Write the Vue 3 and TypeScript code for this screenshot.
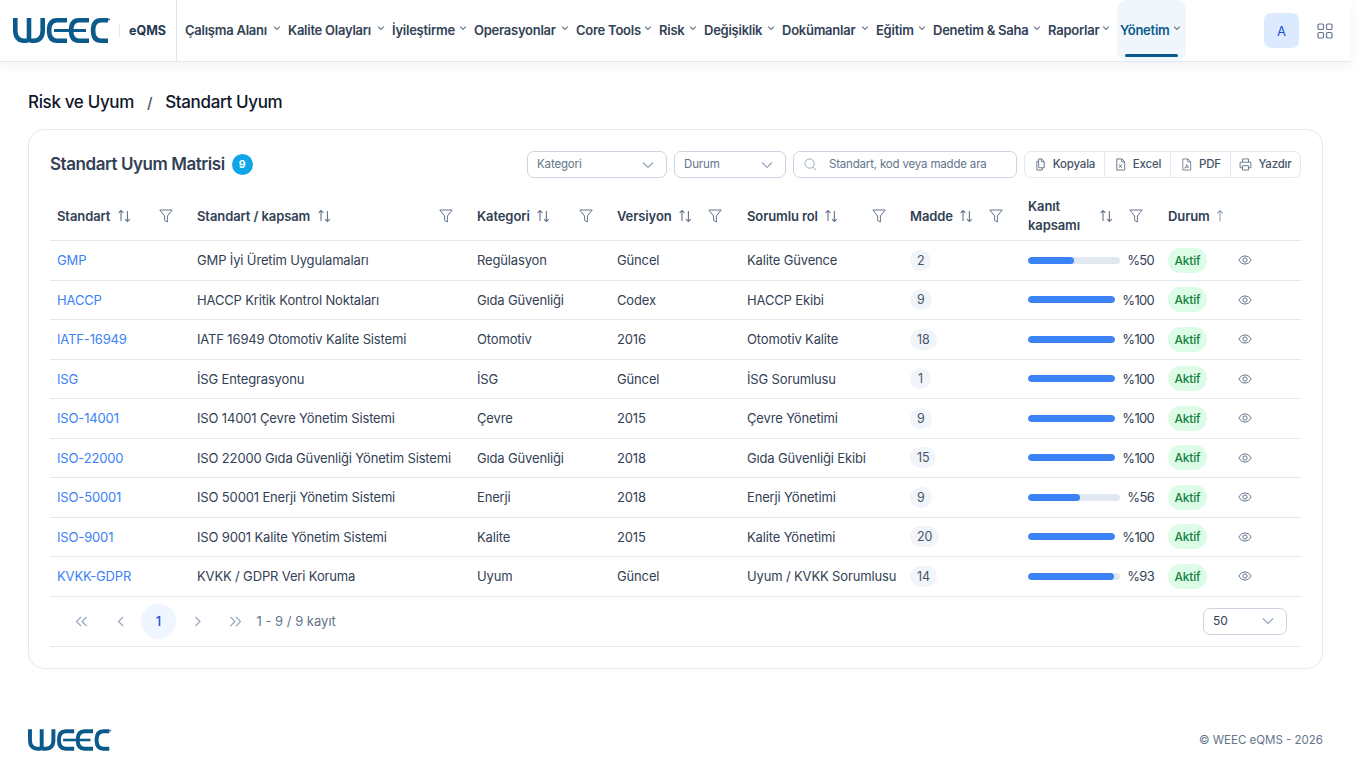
<script setup lang="ts">
interface Row {
  code: string
  name: string
  category: string
  version: string
  owner: string
  items: number
  coverage: number
}

const menu = [
  { label: 'Çalışma Alanı', width: 103 },
  { label: 'Kalite Olayları', width: 104 },
  { label: 'İyileştirme', width: 82 },
  { label: 'Operasyonlar', width: 102 },
  { label: 'Core Tools', width: 83 },
  { label: 'Risk', width: 45 },
  { label: 'Değişiklik', width: 78 },
  { label: 'Dokümanlar', width: 94 },
  { label: 'Eğitim', width: 57 },
  { label: 'Denetim & Saha', width: 115 },
  { label: 'Raporlar', width: 69 },
  { label: 'Yönetim', width: 69 },
]

const columns = [
  { label: 'Standart', cls: 'c1' },
  { label: 'Standart / kapsam', cls: 'c2' },
  { label: 'Kategori', cls: 'c3' },
  { label: 'Versiyon', cls: 'c4' },
  { label: 'Sorumlu rol', cls: 'c5' },
  { label: 'Madde', cls: 'c6' },
  { label: 'Kanıt kapsamı', cls: 'c7' },
]

const rows: Row[] = [
  { code: 'GMP', name: 'GMP İyi Üretim Uygulamaları', category: 'Regülasyon', version: 'Güncel', owner: 'Kalite Güvence', items: 2, coverage: 50 },
  { code: 'HACCP', name: 'HACCP Kritik Kontrol Noktaları', category: 'Gıda Güvenliği', version: 'Codex', owner: 'HACCP Ekibi', items: 9, coverage: 100 },
  { code: 'IATF-16949', name: 'IATF 16949 Otomotiv Kalite Sistemi', category: 'Otomotiv', version: '2016', owner: 'Otomotiv Kalite', items: 18, coverage: 100 },
  { code: 'ISG', name: 'İSG Entegrasyonu', category: 'İSG', version: 'Güncel', owner: 'İSG Sorumlusu', items: 1, coverage: 100 },
  { code: 'ISO-14001', name: 'ISO 14001 Çevre Yönetim Sistemi', category: 'Çevre', version: '2015', owner: 'Çevre Yönetimi', items: 9, coverage: 100 },
  { code: 'ISO-22000', name: 'ISO 22000 Gıda Güvenliği Yönetim Sistemi', category: 'Gıda Güvenliği', version: '2018', owner: 'Gıda Güvenliği Ekibi', items: 15, coverage: 100 },
  { code: 'ISO-50001', name: 'ISO 50001 Enerji Yönetim Sistemi', category: 'Enerji', version: '2018', owner: 'Enerji Yönetimi', items: 9, coverage: 56 },
  { code: 'ISO-9001', name: 'ISO 9001 Kalite Yönetim Sistemi', category: 'Kalite', version: '2015', owner: 'Kalite Yönetimi', items: 20, coverage: 100 },
  { code: 'KVKK-GDPR', name: 'KVKK / GDPR Veri Koruma', category: 'Uyum', version: 'Güncel', owner: 'Uyum / KVKK Sorumlusu', items: 14, coverage: 93 },
]

const exportsList = [
  { label: 'Kopyala', icon: 'i-copy', cls: 'ex-copy' },
  { label: 'Excel', icon: 'i-excel', cls: 'ex-excel' },
  { label: 'PDF', icon: 'i-pdf', cls: 'ex-pdf' },
  { label: 'Yazdır', icon: 'i-print', cls: 'ex-print' },
]
</script>

<template>
  <svg class="sprite" aria-hidden="true">
    <defs>
      <symbol id="i-chev" viewBox="0 0 14 14"><path d="M2 4.500 7 9.500 12 4.500" fill="none" stroke="currentColor" stroke-width="1.100" vector-effect="non-scaling-stroke" /></symbol>
      <symbol id="i-filter" viewBox="0 0 14 14"><path d="M.8 1h12.400L8.400 7v6L5.600 11.400V7Z" fill="none" stroke="currentColor" stroke-width="1" stroke-linejoin="round" /></symbol>
      <symbol id="i-sort" viewBox="0 0 14 14"><path d="M4 12V1.500M1.600 3.900 4 1.500l2.400 2.400M10.400 2v10.500M8 10.100l2.400 2.400 2.400-2.400" fill="none" stroke="currentColor" stroke-width="1.100" /></symbol>
      <symbol id="i-up" viewBox="0 0 10 14"><path d="M5 12.500V1.500M2.200 4.300 5 1.500l2.800 2.800" fill="none" stroke="currentColor" stroke-width="1.100" /></symbol>
      <symbol id="i-eye" viewBox="0 0 14 14"><path d="M.9 7C2.200 4.500 4.400 3 7 3s4.800 1.500 6.100 4C11.800 9.500 9.600 11 7 11S2.200 9.500.9 7Z" fill="none" stroke="currentColor" stroke-width="1" /><circle cx="7" cy="7" r="2.100" fill="none" stroke="currentColor" stroke-width="1" /></symbol>
      <symbol id="i-copy" viewBox="0 0 14 14"><path d="M5 1h3.200L11 3.800V10.500H5ZM5 3.500H3V13H9V10.500M8 1v3h3" fill="none" stroke="currentColor" stroke-width="1" stroke-linejoin="round" /></symbol>
      <symbol id="i-excel" viewBox="0 0 14 14"><path d="M3 1h5.500L11.500 4V13H3ZM8.300 1v3.200h3.200M5.500 7l2.800 3.500M8.300 7l-2.800 3.500" fill="none" stroke="currentColor" stroke-width="1" stroke-linejoin="round" /></symbol>
      <symbol id="i-pdf" viewBox="0 0 14 14"><path d="M3 1h5.500L11.500 4V13H3ZM8.300 1v3.200h3.200M5 10.800c1.500-.8 2.300-2.400 2-4 .4 1.500 1.300 2.500 2.400 2.900-1.500-.1-3 .3-4.400 1.100Z" fill="none" stroke="currentColor" stroke-width=".9" stroke-linejoin="round" /></symbol>
      <symbol id="i-print" viewBox="0 0 14 14"><path d="M3.800 4.500V1h6.400v3.500M3.800 10.500H1.200v-6h11.600v6h-2.600M3.800 8.300h6.400V13H3.800Z" fill="none" stroke="currentColor" stroke-width="1" stroke-linejoin="round" /></symbol>
      <symbol id="i-search" viewBox="0 0 14 14"><circle cx="6" cy="6" r="5" fill="none" stroke="currentColor" stroke-width="1" /><path d="m9.700 9.700 3.500 3.500" stroke="currentColor" stroke-width="1" /></symbol>
      <symbol id="i-logo" viewBox="0 0 97 25">
        <g fill="none" stroke="#0b5a8c" stroke-width="4.600">
          <path d="M2.300 0V12.500C2.300 19.500 6 22.700 11 22.700H13.500C14.800 22.700 16 21.800 16 20.500V0M16 20.500C16 21.800 17.200 22.700 18.500 22.700H21C26 22.700 29.700 19.500 29.700 12.500V0" />
          <path d="M54 2.300H44C38.500 2.300 36.100 6.500 36.100 12.500S38.500 22.700 44 22.700H54" />
          <path d="M76 2.300H66C60.500 2.300 58.100 6.500 58.100 12.500S60.500 22.700 66 22.700H76" />
          <path d="M95 2.300H88C82.500 2.300 80.100 6.500 80.100 12.500S82.500 22.700 88 22.700H95" />
        </g>
        <path d="M41 12.500H73" stroke="#0b5a8c" stroke-width="3" fill="none" />
        <circle cx="96" cy="1.500" r="1" fill="#0b5a8c" />
      </symbol>
    </defs>
  </svg>

  <div class="shell">
    <header class="topbar">
      <div class="brand">
        <svg class="logo"><use href="#i-logo" /></svg>
        <span class="brand-sep"></span>
        <span class="brand-name">eQMS</span>
      </div>
      <nav class="menu">
        <a
          v-for="item in menu"
          :key="item.label"
          class="menu-item"
          :class="{ active: item.label === 'Yönetim' }"
          :style="{ width: item.width + 'px' }"
        >
          <span>{{ item.label }}</span>
          <svg class="menu-chev"><use href="#i-chev" /></svg>
        </a>
      </nav>
      <div class="top-actions">
        <span class="avatar">A</span>
        <svg class="apps" viewBox="0 0 16 16" fill="none" stroke="currentColor" stroke-width="1.200">
          <rect x="1" y="1" width="5.500" height="5.500" rx="1.300" />
          <rect x="9.500" y="1" width="5.500" height="5.500" rx="1.300" />
          <rect x="1" y="9.500" width="5.500" height="5.500" rx="1.300" />
          <rect x="9.500" y="9.500" width="5.500" height="5.500" rx="1.300" />
        </svg>
      </div>
    </header>

    <main class="page">
      <div class="crumbs">
        <span>Risk ve Uyum</span>
        <span class="crumb-sep">/</span>
        <span>Standart Uyum</span>
      </div>

      <section class="card">
        <div class="card-head">
          <h1 class="title">Standart Uyum Matrisi</h1>
          <span class="count">9</span>
          <div class="tools">
            <div class="select sel-cat">
              <span>Kategori</span>
              <svg><use href="#i-chev" /></svg>
            </div>
            <div class="select sel-status">
              <span>Durum</span>
              <svg><use href="#i-chev" /></svg>
            </div>
            <div class="search">
              <svg><use href="#i-search" /></svg>
              <span>Standart, kod veya madde ara</span>
            </div>
            <div class="exports">
              <button v-for="b in exportsList" :key="b.label" class="export" :class="b.cls" type="button">
                <svg><use :href="'#' + b.icon" /></svg>
                <span>{{ b.label }}</span>
              </button>
            </div>
          </div>
        </div>

        <div class="table">
          <div class="thead">
            <div v-for="col in columns" :key="col.label" class="th" :class="col.cls">
              <span class="th-label" :class="{ narrow: col.cls === 'c7' }">{{ col.label }}</span>
              <svg class="sort"><use href="#i-sort" /></svg>
              <svg class="filter"><use href="#i-filter" /></svg>
            </div>
            <div class="th c8">
              <span class="th-label">Durum</span>
              <svg class="sort-up"><use href="#i-up" /></svg>
            </div>
            <div class="th c9"></div>
          </div>

          <div v-for="row in rows" :key="row.code" class="tr">
            <div class="td c1"><a class="code">{{ row.code }}</a></div>
            <div class="td c2">{{ row.name }}</div>
            <div class="td c3">{{ row.category }}</div>
            <div class="td c4">{{ row.version }}</div>
            <div class="td c5">{{ row.owner }}</div>
            <div class="td c6"><span class="pill">{{ row.items }}</span></div>
            <div class="td c7">
              <div class="cover">
                <div class="bar"><div class="fill" :style="{ width: row.coverage + '%' }"></div></div>
                <span class="pct">%{{ row.coverage }}</span>
              </div>
            </div>
            <div class="td c8"><span class="tag">Aktif</span></div>
            <div class="td c9"><svg class="eye"><use href="#i-eye" /></svg></div>
          </div>
        </div>

        <div class="pager">
          <svg class="pg" viewBox="0 0 35 35" fill="none" stroke="currentColor" stroke-width="1.100"><path d="M17 13 12.500 17.500 17 22M22.500 13 18 17.500 22.500 22" /></svg>
          <svg class="pg" viewBox="0 0 35 35" fill="none" stroke="currentColor" stroke-width="1.100"><path d="M20 13 15.500 17.500 20 22" /></svg>
          <span class="pg current">1</span>
          <svg class="pg" viewBox="0 0 35 35" fill="none" stroke="currentColor" stroke-width="1.100"><path d="M15.500 13 20 17.500 15.500 22" /></svg>
          <svg class="pg" viewBox="0 0 35 35" fill="none" stroke="currentColor" stroke-width="1.100"><path d="M12.500 13 17 17.500 12.500 22M18 13 22.500 17.500 18 22" /></svg>
          <span class="pg-info">1 - 9 / 9 kayıt</span>
          <div class="select sel-size">
            <span>50</span>
            <svg><use href="#i-chev" /></svg>
          </div>
        </div>
      </section>
    </main>

    <footer class="foot">
      <svg class="foot-logo"><use href="#i-logo" /></svg>
      <span class="copy">© WEEC eQMS - 2026</span>
    </footer>
  </div>
</template>

<style>
html,
body {
  margin: 0;
  background: #fff;
}
</style>

<style scoped>
.sprite {
  position: absolute;
  width: 0;
  height: 0;
}

.shell {
  width: 1351px;
  font-family: Inter, "Noto Sans", sans-serif;
  color: #334155;
  font-size: 13px;
}

.topbar {
  display: flex;
  align-items: stretch;
  height: 61px;
  background: #fff;
  border-bottom: 1px solid #e2e8f0;
  box-shadow: 0 4px 12px rgba(15, 23, 42, 0.05);
  position: relative;
}

.brand {
  display: flex;
  align-items: center;
  width: 177px;
  padding-left: 13px;
  box-sizing: border-box;
  border-right: 1px solid #dde5ec;
  flex: none;
}

.logo {
  width: 97px;
  height: 25px;
  margin-top: -1px;
}

.brand-sep {
  width: 1px;
  height: 14px;
  background: #e2e8f0;
  margin: 0 9px 0 9px;
}

.brand-name {
  font-size: 12.5px;
  font-weight: 700;
  color: #1e3a52;
}

.menu {
  display: flex;
  padding-left: 8px;
  flex: none;
}

.menu-item {
  display: flex;
  align-items: center;
  justify-content: space-between;
  box-sizing: border-box;
  padding: 0 7px 2px 0;
  font-size: 13px;
  font-weight: 600;
  letter-spacing: -0.25px;
  color: #334155;
  white-space: nowrap;
  position: relative;
}

.menu-chev {
  width: 8px;
  height: 8px;
  margin-top: -3px;
  color: #64748b;
}

.menu-item.active {
  background: #f0f7fc;
  color: #0b5a8c;
  border-radius: 10px;
  padding: 0 5px 2px 3px;
  height: 61px;
}

.menu-item.active::after {
  content: "";
  position: absolute;
  left: 8px;
  right: 8px;
  bottom: 4px;
  height: 3px;
  border-radius: 2px;
  background: #0b5a8c;
}

.top-actions {
  margin-left: auto;
  display: flex;
  align-items: center;
  gap: 18px;
  padding-right: 19px;
}

.avatar {
  width: 35px;
  height: 35px;
  border-radius: 7px;
  background: #dbeafe;
  color: #1d4ed8;
  display: flex;
  align-items: center;
  justify-content: center;
  font-size: 13px;
}

.apps {
  width: 16px;
  height: 16px;
  color: #64748b;
  margin-right: -1px;
}

.page {
  padding: 0 0 0 28px;
}

.crumbs {
  display: flex;
  align-items: center;
  box-sizing: border-box;
  height: 67px;
  padding-top: 13px;
  gap: 13px;
  font-size: 17px;
  font-weight: 500;
  letter-spacing: -0.35px;
  color: #0f172a;
}

.crumb-sep {
  color: #475569;
  font-size: 15px;
}

.card {
  width: 1295px;
  height: 540px;
  box-sizing: border-box;
  border: 1px solid #e2e8f0;
  border-radius: 16px;
  background: #fff;
  padding: 21px;
}

.card-head {
  display: flex;
  align-items: center;
  height: 27px;
}

.title {
  margin: 0 0 2px;
  font-size: 17px;
  font-weight: 600;
  letter-spacing: -0.45px;
  color: #334155;
}

.count {
  width: 21px;
  height: 21px;
  margin-left: 7px;
  border-radius: 50%;
  background: #0ea5e9;
  color: #fff;
  font-size: 10.5px;
  font-weight: 700;
  display: flex;
  align-items: center;
  justify-content: center;
}

.tools {
  margin-left: auto;
  display: flex;
  gap: 7px;
}

.select {
  box-sizing: border-box;
  height: 27px;
  border: 1px solid #cbd5e1;
  border-radius: 7px;
  display: flex;
  align-items: center;
  justify-content: space-between;
  padding: 0 11px 0 9px;
  font-size: 11.5px;
  letter-spacing: -0.15px;
  color: #64748b;
  background: #fff;
}

.select span,
.search span,
.export span {
  margin-top: -1px;
}

.select svg {
  width: 14px;
  height: 14px;
  color: #94a3b8;
}

.sel-cat {
  width: 140px;
}

.sel-status {
  width: 112px;
}

.search {
  box-sizing: border-box;
  width: 224px;
  height: 27px;
  border: 1px solid #cbd5e1;
  border-radius: 7px;
  display: flex;
  align-items: center;
  gap: 12px;
  padding-left: 10px;
  font-size: 11.5px;
  letter-spacing: -0.18px;
  color: #64748b;
}

.search svg {
  width: 13px;
  height: 13px;
  color: #94a3b8;
}

.exports {
  display: flex;
  height: 27px;
  box-sizing: border-box;
  border: 1px solid #e2e8f0;
  border-radius: 7px;
}

.export {
  display: flex;
  align-items: center;
  justify-content: center;
  gap: 6px;
  border: 0;
  background: none;
  padding: 0;
  font: 500 11.5px Inter, sans-serif;
  letter-spacing: -0.2px;
  color: #475569;
  box-sizing: border-box;
  border-right: 1px solid #e2e8f0;
}

.export:last-child {
  border-right: 0;
}

.export svg {
  width: 13px;
  height: 13px;
  color: #64748b;
}

.ex-copy {
  width: 80px;
}

.ex-excel {
  width: 66px;
}

.ex-pdf {
  width: 60px;
}

.ex-print {
  width: 69px;
}

.table {
  margin-top: 12px;
}

.thead,
.tr {
  display: grid;
  grid-template-columns: 140px 280px 140px 130px 163px 118px 140px 71px 69px;
  box-sizing: border-box;
  border-bottom: 1px solid #e2e8f0;
}

.thead {
  height: 51px;
}

.tr {
  height: 39.5px;
}

.th {
  display: flex;
  align-items: center;
  padding: 2px 0 0 7px;
  font-size: 13px;
  font-weight: 600;
  letter-spacing: -0.1px;
  color: #334155;
  min-width: 0;
  position: relative;
}

.th-label.narrow {
  width: 62px;
  line-height: 19px;
  margin-top: -1px;
}

.sort {
  width: 14px;
  height: 14px;
  margin-left: 6.500px;
  color: #64748b;
}

.c7 .sort {
  margin-left: 9px;
}

.sort-up {
  width: 10px;
  height: 14px;
  margin-left: 5px;
  color: #94a3b8;
}

.filter {
  width: 14px;
  height: 14px;
  margin-left: auto;
  margin-right: 17px;
  color: #64748b;
}

.c4 .filter,
.c6 .filter,
.c7 .filter {
  margin-right: 18px;
}

.td {
  display: flex;
  align-items: center;
  padding-left: 7px;
  white-space: nowrap;
  font-size: 13px;
  letter-spacing: -0.15px;
  color: #334155;
  min-width: 0;
}

.td.c9 {
  padding-left: 6px;
}

.code {
  color: #3b82f6;
}

.pill {
  min-width: 21px;
  height: 21px;
  box-sizing: border-box;
  padding: 0 7px;
  border-radius: 10.5px;
  background: #f1f5f9;
  color: #475569;
  display: flex;
  align-items: center;
  justify-content: center;
  font-size: 12.5px;
}

.cover {
  width: 126px;
  display: flex;
  align-items: center;
  gap: 7px;
}

.pct {
  letter-spacing: -0.7px;
}

.bar {
  flex: 1;
  height: 7px;
  border-radius: 4px;
  background: #e2e8f0;
  overflow: hidden;
}

.fill {
  height: 100%;
  border-radius: 4px;
  background: #3b82f6;
}

.tag {
  height: 25px;
  width: 39px;
  border-radius: 12.5px;
  background: #dcfce7;
  color: #15803d;
  display: flex;
  align-items: center;
  justify-content: center;
  font-size: 12px;
  font-weight: 500;
  letter-spacing: -0.2px;
}

.eye {
  width: 14px;
  height: 14px;
  color: #64748b;
}

.pager {
  display: flex;
  align-items: center;
  height: 50px;
  box-sizing: border-box;
  border-bottom: 1px solid #e2e8f0;
  padding-left: 14px;
  gap: 3.5px;
}

.pg {
  width: 35px;
  height: 35px;
  flex: none;
  color: #94a3b8;
}

.current {
  border-radius: 50%;
  background: #eff6ff;
  color: #1d4ed8;
  display: flex;
  align-items: center;
  justify-content: center;
  font-size: 13px;
  font-weight: 500;
}

.pg-info {
  margin-left: 0;
  font-size: 13px;
  color: #64748b;
}

.sel-size {
  margin-left: auto;
  margin-right: 14px;
  width: 84px;
  color: #334155;
  font-size: 12px;
}

.foot {
  display: flex;
  align-items: center;
  justify-content: space-between;
  padding: 60px 28px 0 28px;
}

.foot-logo {
  width: 83px;
  height: 22px;
}

.copy {
  font-size: 11.5px;
  color: #64748b;
}
</style>
